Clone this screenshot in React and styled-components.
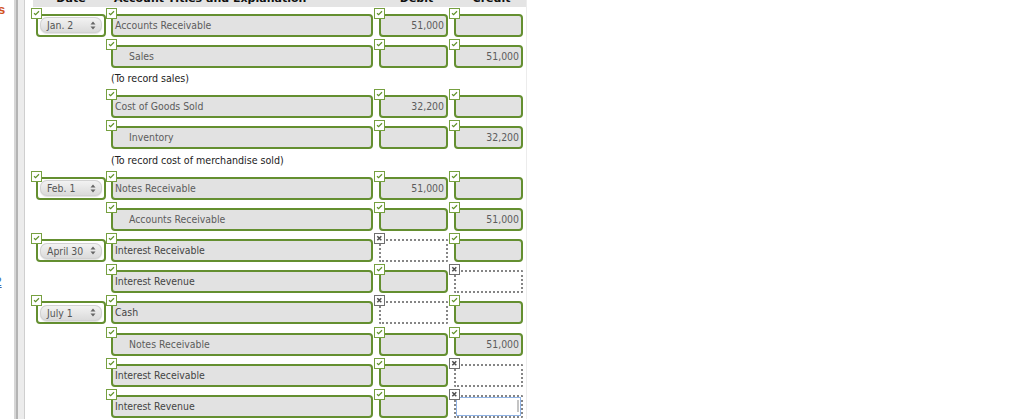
import React from "react";
import styled, { createGlobalStyle } from "styled-components";

const GlobalStyle = createGlobalStyle`
  html, body {
    margin: 0;
    padding: 0;
    background: #fff;
  }
  body {
    font-family: "DejaVu Sans Condensed", "DejaVu Sans", Verdana, sans-serif;
  }
`;

const GREEN = "#648f30";

const Page = styled.div`
  display: flex;
  height: 419px;
  overflow: hidden;
`;

const Margin = styled.div`
  width: 14px;
  display: flex;
  flex-direction: column;
  overflow: hidden;
`;

const CutWord = styled.span`
  font-family: "Liberation Sans", Arial, sans-serif;
  font-weight: bold;
  font-size: 13px;
  line-height: 14px;
  color: #d2521f;
  margin: 3px 0 0 -2px;
`;

const CutLink = styled.span`
  font-family: "Liberation Sans", Arial, sans-serif;
  font-size: 12px;
  line-height: 12px;
  color: #2f6db5;
  text-decoration: underline;
  margin: 259px 0 0 -5px;
`;

const Bars = styled.div`
  width: 12px;
  background: linear-gradient(
    to right,
    #d6d6d6 0 2px,
    #b4b4b4 2px 4px,
    #ececec 4px 10px,
    #cfcfcf 10px 11px,
    #fff 11px 12px
  );
`;

const Spacer = styled.div`
  width: 7px;
`;

const Table = styled.div`
  width: 493px;
  border-right: 1px solid #ececec;
  display: flex;
  flex-direction: column;
`;

const Header = styled.div`
  height: 7px;
  overflow: hidden;
  background: #e4e4e4;
  display: grid;
  grid-template-columns: 78px 268px 75px 69px;
  padding-left: 3px;
`;

const HeadLabel = styled.div`
  font-family: "DejaVu Sans", Verdana, sans-serif;
  font-weight: bold;
  font-size: 11px;
  line-height: 13px;
  margin-top: -8px;
  color: #111;
  text-align: ${(p) => p.$align || "center"};
  width: ${(p) => p.$w}px;
`;

const Row = styled.div`
  display: grid;
  grid-template-columns: 75px 268px 75px 69px;
  padding-left: 3px;
  height: 31.33px;
  box-sizing: border-box;
`;

const Memo = styled.div`
  height: 19px;
  padding-left: 78px;
  font-size: 10.6px;
  line-height: 19px;
  color: #222;
`;

const Cell = styled.div`
  position: relative;
  padding-top: 7px;
`;

const Mark = styled.div`
  position: absolute;
  left: -5px;
  top: 1px;
  width: 11px;
  height: 11px;
  box-sizing: border-box;
  background: #fff;
  border: 1px solid ${(p) => (p.$bad ? "#6f6f6f" : "#76a040")};
  z-index: 2;
  display: flex;
`;

const Field = styled.div`
  position: relative;
  width: ${(p) => p.$w}px;
  height: 23px;
  box-sizing: border-box;
  border: 2px ${(p) => (p.$bad ? "dotted #858585" : `solid ${GREEN}`)};
  border-radius: ${(p) => (p.$bad ? "1px" : "4px")};
  background: ${(p) => (p.$bad ? "#fff" : "#e2e2e2")};
  box-shadow: ${(p) => (p.$focus ? "inset 0 0 0 1px #8fb3e6" : "none")};
  font-size: 10.4px;
  line-height: 19px;
  color: ${(p) => (p.$dark ? "#444" : "#5c5c5c")};
  padding: ${(p) => (p.$indent ? "0 2px 0 16px" : "0 2px 0 2px")};
  text-align: ${(p) => (p.$num ? "right" : "left")};
  white-space: nowrap;
  overflow: hidden;

  &::after {
    content: "";
    display: ${(p) => (p.$focus ? "block" : "none")};
    position: absolute;
    right: 2px;
    top: 3px;
    width: 2px;
    height: 12px;
    background: #c4c4c4;
  }
`;

const DateBox = styled.div`
  width: 70px;
  height: 23px;
  box-sizing: border-box;
  border: 2px solid ${GREEN};
  border-radius: 4px;
  background: #fff;
  display: flex;
  align-items: center;
  padding: 0 2px;
`;

const Pill = styled.div`
  flex: 1;
  height: 16px;
  border-radius: 7px;
  background: linear-gradient(#f4f4f4, #d9d9d9);
  box-shadow: inset 0 0 0 1px #d2d2d2, 0 1px 1px rgba(0, 0, 0, 0.12);
  display: flex;
  align-items: center;
  justify-content: space-between;
  padding: 0 6px 0 7px;
  font-size: 10.4px;
  color: #555;
`;

const Check = () => (
  <svg width="9" height="9" viewBox="0 0 9 9">
    <path d="M2 4.2 L3.6 5.6 L7 2.3" fill="none" stroke="#5f9128" strokeWidth="1.2" />
  </svg>
);

const Cross = () => (
  <svg width="9" height="9" viewBox="0 0 9 9">
    <path d="M2.3 2.3 L6.3 6.3 M6.3 2.3 L2.3 6.3" fill="none" stroke="#4d4d4d" strokeWidth="1.5" />
  </svg>
);

const Arrows = () => (
  <svg width="6" height="9" viewBox="0 0 6 9">
    <path d="M3 0.5 L5.5 3.5 L0.5 3.5 Z M3 8.5 L5.5 5.5 L0.5 5.5 Z" fill="#666" />
  </svg>
);

const Status = ({ bad }) => <Mark $bad={bad}>{bad ? <Cross /> : <Check />}</Mark>;

const rows = [
  { date: "Jan. 2", account: "Accounts Receivable", debit: "51,000" },
  { account: "Sales", indent: true, credit: "51,000" },
  { memo: "(To record sales)" },
  { account: "Cost of Goods Sold", debit: "32,200" },
  { account: "Inventory", indent: true, credit: "32,200" },
  { memo: "(To record cost of merchandise sold)" },
  { date: "Feb. 1", account: "Notes Receivable", debit: "51,000" },
  { account: "Accounts Receivable", indent: true, credit: "51,000" },
  { date: "April 30", account: "Interest Receivable", dark: true, debitBad: true },
  { account: "Interest Revenue", dark: true, creditBad: true },
  { date: "July 1", account: "Cash", dark: true, debitBad: true },
  { account: "Notes Receivable", indent: true, credit: "51,000" },
  { account: "Interest Receivable", dark: true, creditBad: true },
  { account: "Interest Revenue", dark: true, creditBad: true, focus: true },
];

const Entry = ({ r }) => (
  <Row>
    <Cell>
      {r.date && (
        <>
          <Status />
          <DateBox>
            <Pill>
              <span>{r.date}</span>
              <Arrows />
            </Pill>
          </DateBox>
        </>
      )}
    </Cell>
    <Cell>
      <Status />
      <Field $w={262} $indent={r.indent} $dark={r.dark}>
        {r.account}
      </Field>
    </Cell>
    <Cell>
      <Status bad={r.debitBad} />
      <Field $w={69} $num $bad={r.debitBad}>
        {r.debit}
      </Field>
    </Cell>
    <Cell>
      <Status bad={r.creditBad} />
      <Field $w={69} $num $bad={r.creditBad} $focus={r.focus}>
        {r.credit}
      </Field>
    </Cell>
  </Row>
);

export default function App() {
  return (
    <>
      <GlobalStyle />
      <Page>
        <Margin>
          <CutWord>s</CutWord>
          <CutLink>2</CutLink>
        </Margin>
        <Bars />
        <Spacer />
        <Table>
          <Header>
            <HeadLabel $w={70}>Date</HeadLabel>
            <HeadLabel $w={262} $align="left">
              Account Titles and Explanation
            </HeadLabel>
            <HeadLabel $w={69}>Debit</HeadLabel>
            <HeadLabel $w={69}>Credit</HeadLabel>
          </Header>
          {rows.map((r, i) =>
            r.memo ? <Memo key={i}>{r.memo}</Memo> : <Entry key={i} r={r} />
          )}
        </Table>
      </Page>
    </>
  );
}
